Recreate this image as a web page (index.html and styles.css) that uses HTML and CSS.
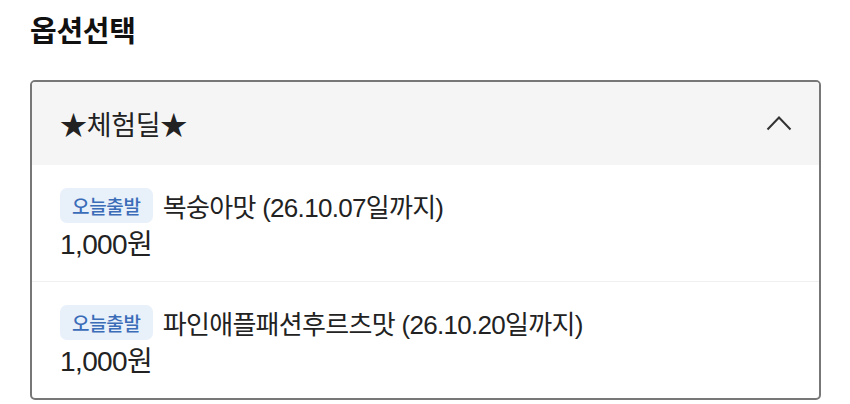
FILE: index.html
```html
<!DOCTYPE html>
<html lang="ko">
<head>
<meta charset="utf-8">
<link rel="stylesheet" href="styles.css">
</head>
<body>
<div class="page">
  <h1 class="title">옵션선택</h1>
  <div class="box">
    <div class="box-head">
      <span class="head-text">★체험딜★</span>
      <svg class="chev" width="26" height="16" viewBox="0 0 26 16"><path d="M1.5 14.5 L13 2.5 L24.5 14.5" fill="none" stroke="#333" stroke-width="2"/></svg>
    </div>
    <div class="item">
      <div class="row"><span class="badge">오늘출발</span><span class="name">복숭아맛 (26.10.07일까지)</span></div>
      <div class="price">1,000원</div>
    </div>
    <div class="item">
      <div class="row"><span class="badge">오늘출발</span><span class="name">파인애플패션후르츠맛 (26.10.20일까지)</span></div>
      <div class="price">1,000원</div>
    </div>
  </div>
</div>
</body>
</html>
```
FILE: styles.css
```css
html, body { margin: 0; padding: 0; background: #fff; }
body { font-family: "Liberation Sans", "Noto Sans CJK KR", sans-serif; color: #222; }
.page { padding: 10px 29px 0 30px; }
.title { margin: 0; font-family: "Noto Sans CJK KR", sans-serif; font-weight: 700; font-size: 29px; line-height: 38px; color: #111; letter-spacing: -0.25px; }
.box { margin-top: 32px; border: 2px solid #777; border-radius: 5px; overflow: hidden; }
.box-head { height: 83px; background: #f5f5f5; display: flex; align-items: center; justify-content: space-between; padding: 0 27px 0 28px; }
.head-text { font-family: "Noto Sans CJK KR", sans-serif; font-size: 27px; letter-spacing: -0.3px; color: #222; }
.chev { display: block; margin-top: -2px; }
.item { padding: 23px 28px 18px; border-top: 1px solid #f0f0f0; }
.box-head + .item { border-top: 0; }
.row { display: flex; align-items: center; height: 35px; }
.badge { display: inline-flex; align-items: center; height: 35px; padding: 0 12px; background: #e8f0fa; color: #3a6cb8; border-radius: 7px; font-family: "Noto Sans CJK KR", sans-serif; font-size: 19px; font-weight: 500; letter-spacing: -0.3px; }
.name { margin-left: 10px; font-size: 26px; letter-spacing: -0.7px; }
.price { margin-top: 4px; font-size: 28px; line-height: 36px; letter-spacing: -0.6px; }
```
